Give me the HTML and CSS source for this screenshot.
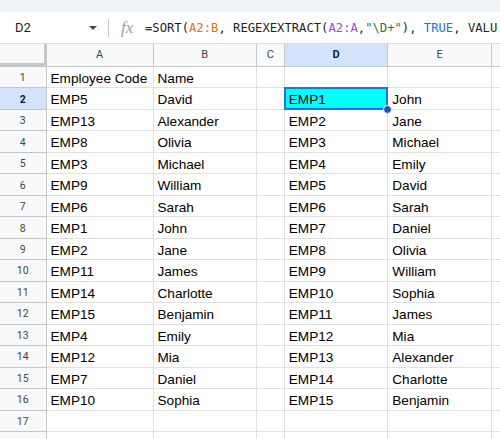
FILE: index.html
```html
<!DOCTYPE html>
<html>
<head>
<meta charset="utf-8">
<link rel="stylesheet" href="styles.css">
</head>
<body>
<div class="app">
  <div class="topstrip"></div>
  <div class="fbar">
    <div class="namebox"><span class="ref">D2</span><span class="caret"></span></div>
    <div class="sep"></div>
    <div class="fx">fx</div>
    <div class="formula">=SORT(<span class="o">A2:B</span>, REGEXEXTRACT(<span class="p">A2:A</span>,<span class="g">"\D+"</span>), <span class="b">TRUE</span>, VALU</div>
  </div>
  <div class="grid">
    <div class="corner"></div>
    <div class="ch">A</div><div class="ch">B</div><div class="ch">C</div><div class="ch sel">D</div><div class="ch">E</div><div class="ch"></div>

    <div class="rh">1</div><div class="c">Employee Code</div><div class="c">Name</div><div class="c"></div><div class="c"></div><div class="c"></div><div class="c"></div>
    <div class="rh sel">2</div><div class="c">EMP5</div><div class="c">David</div><div class="c"></div><div class="c active">EMP1<span class="handle"></span></div><div class="c">John</div><div class="c"></div>
    <div class="rh">3</div><div class="c">EMP13</div><div class="c">Alexander</div><div class="c"></div><div class="c">EMP2</div><div class="c">Jane</div><div class="c"></div>
    <div class="rh">4</div><div class="c">EMP8</div><div class="c">Olivia</div><div class="c"></div><div class="c">EMP3</div><div class="c">Michael</div><div class="c"></div>
    <div class="rh">5</div><div class="c">EMP3</div><div class="c">Michael</div><div class="c"></div><div class="c">EMP4</div><div class="c">Emily</div><div class="c"></div>
    <div class="rh">6</div><div class="c">EMP9</div><div class="c">William</div><div class="c"></div><div class="c">EMP5</div><div class="c">David</div><div class="c"></div>
    <div class="rh">7</div><div class="c">EMP6</div><div class="c">Sarah</div><div class="c"></div><div class="c">EMP6</div><div class="c">Sarah</div><div class="c"></div>
    <div class="rh">8</div><div class="c">EMP1</div><div class="c">John</div><div class="c"></div><div class="c">EMP7</div><div class="c">Daniel</div><div class="c"></div>
    <div class="rh">9</div><div class="c">EMP2</div><div class="c">Jane</div><div class="c"></div><div class="c">EMP8</div><div class="c">Olivia</div><div class="c"></div>
    <div class="rh">10</div><div class="c">EMP11</div><div class="c">James</div><div class="c"></div><div class="c">EMP9</div><div class="c">William</div><div class="c"></div>
    <div class="rh">11</div><div class="c">EMP14</div><div class="c">Charlotte</div><div class="c"></div><div class="c">EMP10</div><div class="c">Sophia</div><div class="c"></div>
    <div class="rh">12</div><div class="c">EMP15</div><div class="c">Benjamin</div><div class="c"></div><div class="c">EMP11</div><div class="c">James</div><div class="c"></div>
    <div class="rh">13</div><div class="c">EMP4</div><div class="c">Emily</div><div class="c"></div><div class="c">EMP12</div><div class="c">Mia</div><div class="c"></div>
    <div class="rh">14</div><div class="c">EMP12</div><div class="c">Mia</div><div class="c"></div><div class="c">EMP13</div><div class="c">Alexander</div><div class="c"></div>
    <div class="rh">15</div><div class="c">EMP7</div><div class="c">Daniel</div><div class="c"></div><div class="c">EMP14</div><div class="c">Charlotte</div><div class="c"></div>
    <div class="rh">16</div><div class="c">EMP10</div><div class="c">Sophia</div><div class="c"></div><div class="c">EMP15</div><div class="c">Benjamin</div><div class="c"></div>
    <div class="rh">17</div><div class="c"></div><div class="c"></div><div class="c"></div><div class="c"></div><div class="c"></div><div class="c"></div>
    <div class="rh"></div><div class="c"></div><div class="c"></div><div class="c"></div><div class="c"></div><div class="c"></div><div class="c"></div>
  </div>
</div>
</body>
</html>
```

FILE: styles.css
```css
* { box-sizing: border-box; }
html, body { margin: 0; padding: 0; background: #fff; }
body { width: 500px; height: 439px; overflow: hidden; }
.app { width: 500px; height: 439px; overflow: hidden; }
.topstrip { height: 12px; background: #f0f4f9; }
.fbar {
  height: 32px;
  display: flex;
  align-items: center;
  border-bottom: 1px solid #dadce0;
  background: #fff;
  white-space: nowrap;
  overflow: hidden;
}
.fbar > * { flex-shrink: 0; }
.namebox { width: 108px; display: flex; align-items: center; padding-left: 15px; }
.ref { font-family: Roboto, "Liberation Sans", sans-serif; font-size: 13px; color: #1f1f1f; width: 74px; }
.caret {
  width: 0; height: 0;
  border-left: 4px solid transparent;
  border-right: 4px solid transparent;
  border-top: 4px solid #444746;
}
.sep { width: 1px; height: 18px; background: #c4c7c5; }
.fx {
  width: 36px; padding-left: 12px;
  font-family: "Liberation Serif", serif; font-style: italic;
  font-size: 17px; color: #9aa0a6;
}
.formula {
  font-family: "DejaVu Sans Mono", monospace; font-size: 12.2px; color: #1f1f1f;
  padding-top: 1px;
}
.formula .o { color: #e8710a; }
.formula .p { color: #a142f4; }
.formula .g { color: #188038; }
.formula .b { color: #1a73e8; }

.grid {
  display: grid;
  grid-template-columns: 46.5px 107px 103.3px 28px 103.5px 103.7px 20px;
  grid-template-rows: 23px;
  grid-auto-rows: 21.47px;
  font-family: "Liberation Sans", Arial, sans-serif;
}
.corner {
  background: #f8f9fa;
  border-right: 3px solid #c4c7c5;
  border-bottom: 4px solid #c4c7c5;
}
.ch {
  background: #f8f9fa;
  border-right: 1px solid #c4c7c5;
  border-bottom: 1px solid #c4c7c5;
  display: flex; align-items: center; justify-content: center;
  font-family: Roboto, "Liberation Sans", sans-serif;
  font-size: 11px; color: #444746;
  padding-bottom: 1px;
}
.ch.sel { background: #d3e3fd; color: #041e49; font-weight: 700; }
.rh {
  background: #f8f9fa;
  border-right: 1px solid #c4c7c5;
  border-bottom: 1px solid #c4c7c5;
  display: flex; align-items: center; justify-content: center;
  font-family: Roboto, "Liberation Sans", sans-serif;
  font-size: 10.5px; color: #444746;
  padding-top: 1px;
}
.rh.sel { background: #d3e3fd; color: #041e49; font-weight: 700; }
.c {
  position: relative;
  border-right: 1px solid #e1e1e1;
  border-bottom: 1px solid #e1e1e1;
  font-size: 13.6px; color: #000;
  padding: 0 3px 0.5px 4px;
  display: flex; align-items: flex-end;
  white-space: nowrap; overflow: visible;
  line-height: 16px;
}
.c.active { background: #00ffff; }
.c.active::before {
  content: "";
  position: absolute; left: -1px; top: -1px; right: -1px; bottom: -1px;
  border: 2px solid #1a73e8;
}
.handle {
  position: absolute; right: -5px; bottom: -5px;
  width: 9px; height: 9px; border-radius: 50%;
  background: #1557c9; border: 1px solid #fff;
  z-index: 2;
}
```
